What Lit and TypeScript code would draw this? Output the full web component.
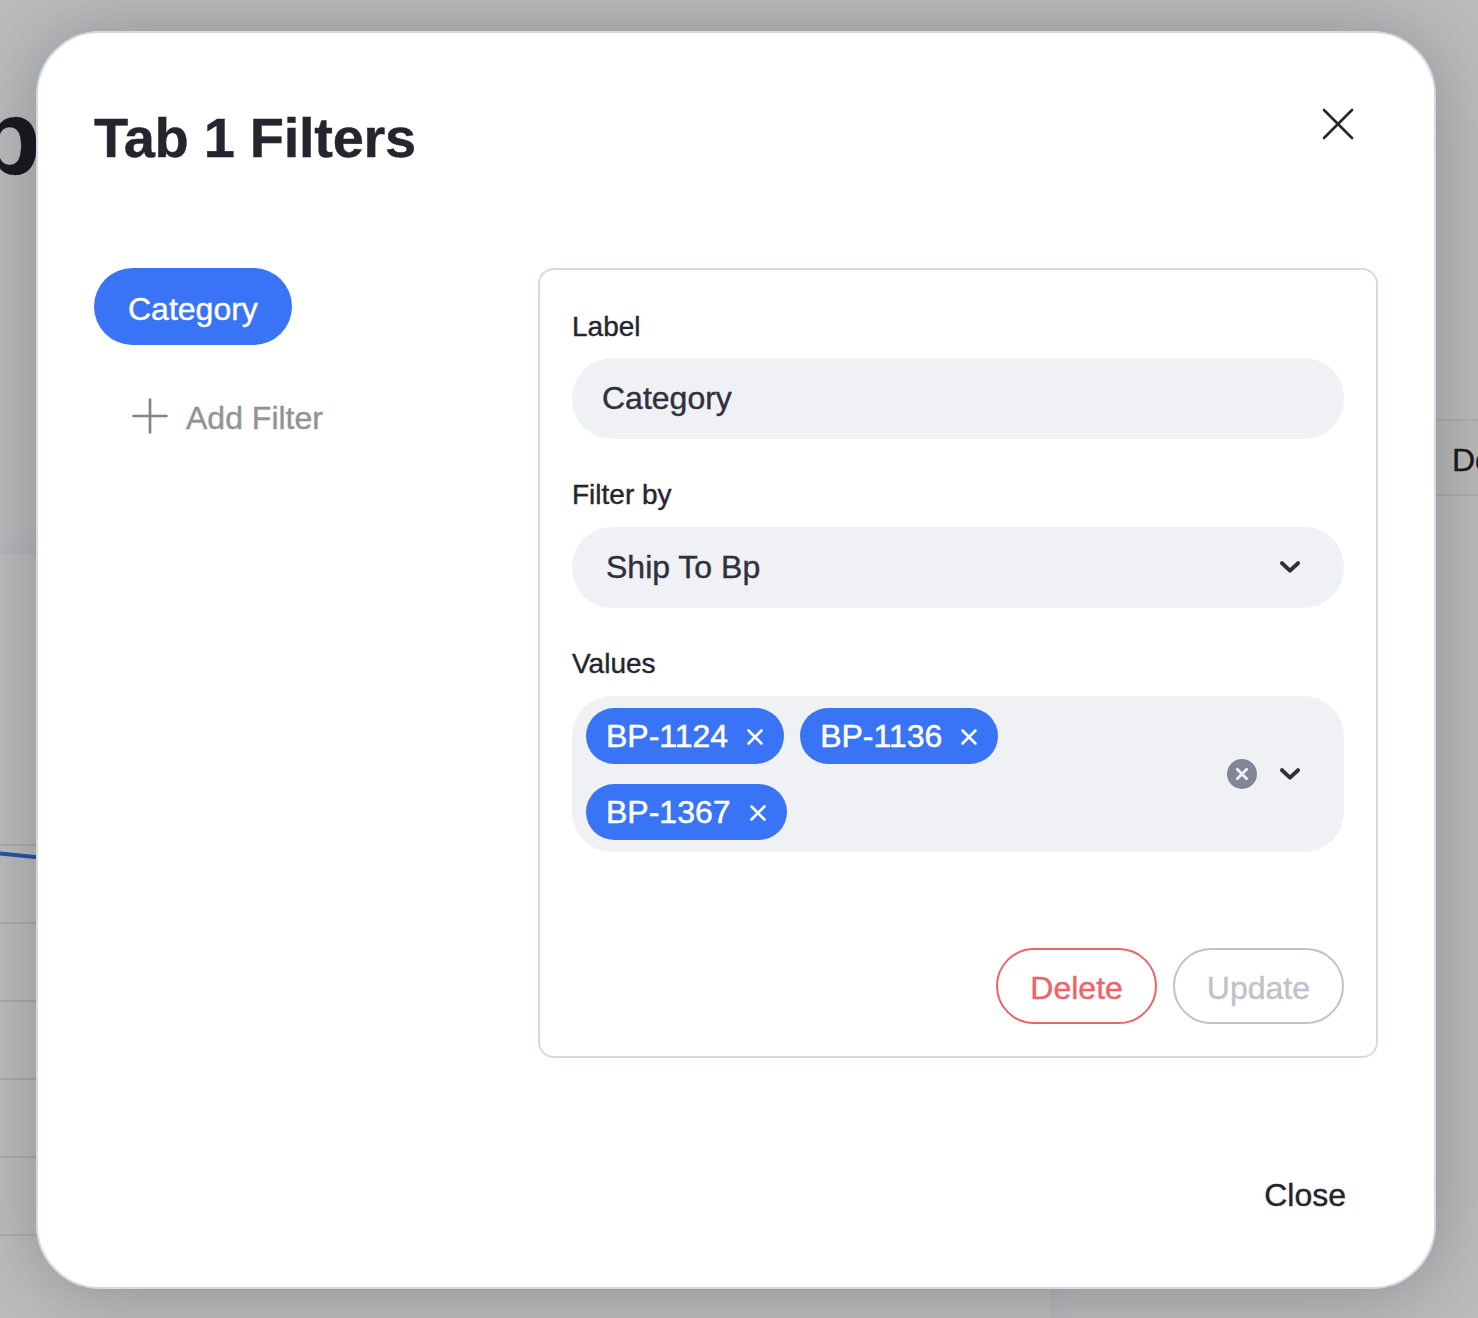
import { LitElement, html, css } from "lit";
import { customElement, property, state } from "lit/decorators.js";

const chevron = html`<svg class="chevron" width="24" height="16" viewBox="0 0 24 16" fill="none" stroke="#30303d" stroke-width="4" stroke-linecap="round" stroke-linejoin="round"><path d="M4 4.2 12 11.6 20 4.2" /></svg>`;

/** Dashboard page dimmed behind the dialog. */
@customElement("dashboard-backdrop")
export class DashboardBackdrop extends LitElement {
  static styles = css`
    :host { display: flex; flex-direction: column; height: 1318px; background: #bbbcbe; overflow: hidden; }
    .heading { height: 419px; flex: none; box-sizing: border-box; padding-top: 77px; font-size: 106px; line-height: 120px; font-weight: 700; color: #1a1a20; }
    .heading-text { display: block; margin-left: -24px; }
    .toolbar { height: 77px; flex: none; display: flex; justify-content: flex-end; margin-bottom: 58px; }
    .tool { box-sizing: border-box; width: 178px; border-block: 2px solid #afb0b3; background: #bababa; font-size: 32px; line-height: 78px; color: #1a1a20; padding-left: 152px; white-space: nowrap; overflow: hidden; }
    .card { flex: 1; width: 1050px; background: #bdbdbd; box-shadow: 0 0 30px rgba(40, 40, 90, 0.07); }
    .chart { display: block; }
  `;
  render() {
    const rows = [0, 1, 2, 3, 4, 5];
    return html`
      <div class="heading"><span class="heading-text">p</span></div>
      <div class="toolbar"><div class="tool">De</div></div>
      <div class="card">
        <svg class="chart" width="1050" height="764" viewBox="0 554 1050 764">
          <path d=${rows.map((i) => `M0 ${845 + i * 78}H1050`).join("")} stroke="#acacb4" stroke-width="2" />
          <path d="M-2 853.2 60 859.5" stroke="#2058a8" stroke-width="4" />
        </svg>
      </div>`;
  }
}

@customElement("value-chip")
export class ValueChip extends LitElement {
  @property() label = "";
  static styles = css`
    :host { display: flex; align-items: center; height: 56px; box-sizing: border-box; border-radius: 28px; padding: 0 20px; gap: 18px; background: #3974f6; color: #fff; font-size: 32px; line-height: 56px; -webkit-text-stroke: 0.5px #fff; }
    .remove { display: block; margin-top: 1px; }
  `;
  render() {
    return html`<span>${this.label}</span>
      <svg class="remove" width="18" height="18" viewBox="0 0 18 18" stroke="#fff" stroke-width="2.6" stroke-linecap="round"><path d="M2.5 2.5 15.5 15.5M15.5 2.5 2.5 15.5" /></svg>`;
  }
}

@customElement("app-root")
export class AppRoot extends LitElement {
  @state() private values = ["BP-1124", "BP-1136", "BP-1367"];

  static styles = css`
    :host { display: block; position: relative; width: 1478px; height: 1318px; overflow: hidden; font-family: "Liberation Sans", Arial, Helvetica, sans-serif; color: #25252e; -webkit-text-stroke: 0.4px currentcolor; }
    .overlay { position: absolute; inset: 0; padding: 31px 42px 29px 36px; display: flex; }
    .dialog { flex: 1; box-sizing: border-box; border: 2px solid #d5d9e6; border-radius: 64px; background: #fff; box-shadow: 0 4px 80px rgba(0, 0, 0, 0.25); padding: 56px; display: flex; flex-direction: column; }
    .header { display: flex; justify-content: space-between; height: 179px; flex: none; }
    .title { margin: 17px 0 0; font-size: 56px; line-height: 64px; font-weight: 700; letter-spacing: -0.3px; }
    .dismiss { display: block; margin: 18px 23px 0 0; }
    .body { display: flex; justify-content: space-between; align-items: flex-start; }
    .filters { display: flex; flex-direction: column; align-items: flex-start; }
    .pill { height: 77px; box-sizing: border-box; border-radius: 39px; padding: 0 34px; background: #3974f6; color: #fff; font-size: 32px; line-height: 83px; -webkit-text-stroke-color: #fff; }
    .add { display: flex; align-items: center; gap: 18px; margin: 49px 0 0 38px; color: #929297; font-size: 32px; line-height: 40px; }
    .add-text { padding-top: 4px; }
    .panel { width: 840px; height: 790px; box-sizing: border-box; border: 2px solid #d5d9e6; border-radius: 16px; padding: 38px 32px 32px; display: flex; flex-direction: column; }
    .label { font-size: 28px; line-height: 38px; height: 51px; }
    .label:first-child { height: 50px; }
    .field { height: 81px; box-sizing: border-box; border-radius: 40px; background: #f0f1f5; color: #30303d; font-size: 32px; line-height: 80px; padding: 0 42px 2px 30px; display: flex; align-items: center; justify-content: space-between; margin-bottom: 37px; flex: none; }
    .select { padding-left: 34px; }
    .multi { height: 156px; padding-left: 14px; padding-bottom: 0; margin: 0; }
    .chips { display: flex; flex-wrap: wrap; gap: 20px 16px; width: 480px; }
    .controls { display: flex; align-items: center; gap: 21px; }
    .chevron, .clear { display: block; }
    .actions { display: flex; justify-content: flex-end; gap: 16px; margin-top: auto; }
    .button { height: 76px; box-sizing: border-box; border: 2px solid; border-radius: 38px; padding: 0 32px; font-size: 32px; line-height: 76px; }
    .danger { color: #ec6468; }
    .disabled { color: #c1c1ca; }
    .footer { display: flex; justify-content: flex-end; margin-top: 118px; padding-right: 32px; font-size: 32px; line-height: 38px; }
  `;

  render() {
    return html`
      <dashboard-backdrop></dashboard-backdrop>
      <div class="overlay">
        <div class="dialog" role="dialog">
          <div class="header">
            <h1 class="title">Tab 1 Filters</h1>
            <svg class="dismiss" width="34" height="34" viewBox="0 0 34 34" stroke="#25252e" stroke-width="2.6" stroke-linecap="round"><path d="M3 3 31 31M31 3 3 31" /></svg>
          </div>
          <div class="body">
            <div class="filters">
              <div class="pill">Category</div>
              <div class="add">
                <svg width="36" height="36" viewBox="0 0 36 36" stroke="#858588" stroke-width="2.7" stroke-linecap="round"><path d="M18 1.5V34.5M1.5 18H34.5" /></svg>
                <span class="add-text">Add Filter</span>
              </div>
            </div>
            <div class="panel">
              <div class="label">Label</div>
              <div class="field">Category</div>
              <div class="label">Filter by</div>
              <div class="field select">Ship To Bp${chevron}</div>
              <div class="label">Values</div>
              <div class="field multi">
                <div class="chips">${this.values.map((v) => html`<value-chip .label=${v}></value-chip>`)}</div>
                <div class="controls">
                  <svg class="clear" width="30" height="30" viewBox="0 0 30 30"><circle cx="15" cy="15" r="15" fill="#828596" /><path d="M10.3 10.3 19.7 19.7M19.7 10.3 10.3 19.7" stroke="#f0f1f5" stroke-width="2.8" stroke-linecap="round" /></svg>
                  ${chevron}
                </div>
              </div>
              <div class="actions">
                <div class="button danger">Delete</div>
                <div class="button disabled">Update</div>
              </div>
            </div>
          </div>
          <div class="footer">Close</div>
        </div>
      </div>`;
  }
}
